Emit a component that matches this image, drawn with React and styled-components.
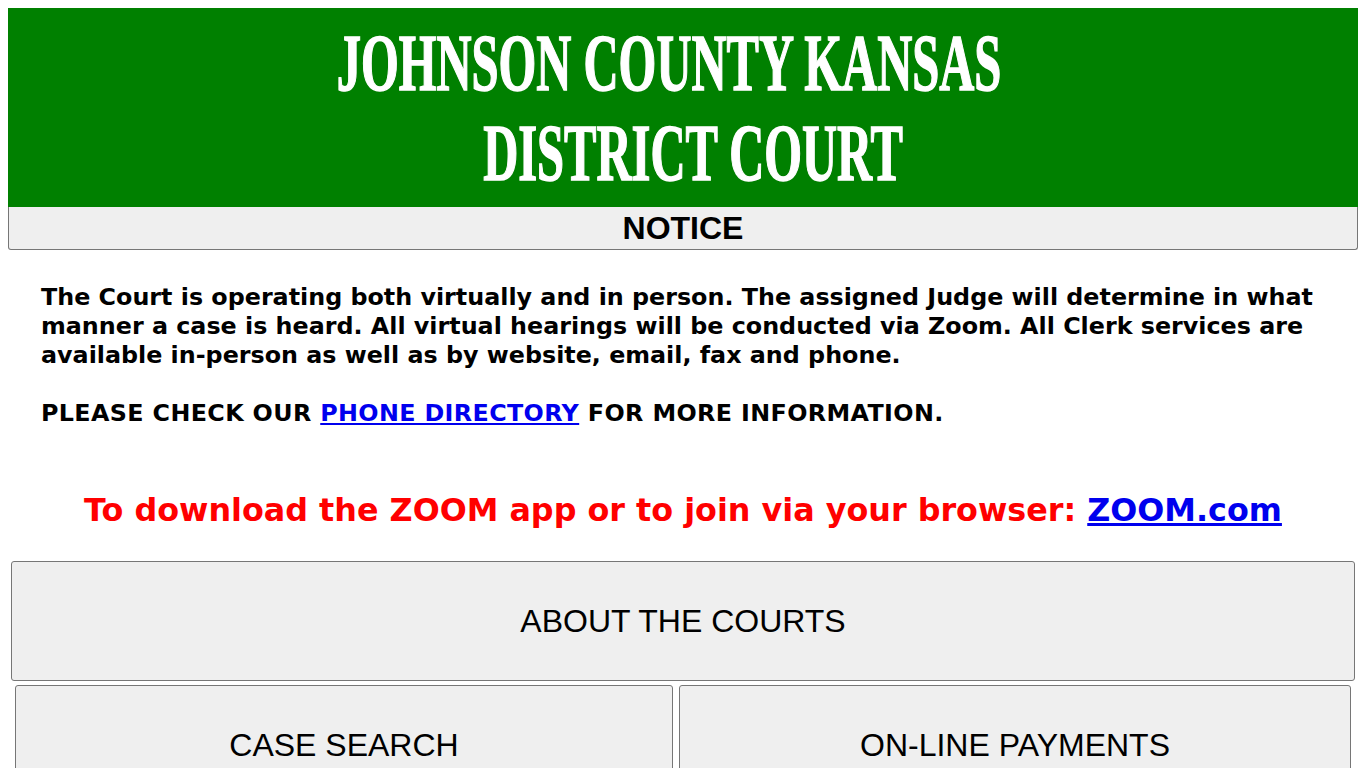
import React from 'react';
import styled, { createGlobalStyle } from 'styled-components';

const GlobalStyle = createGlobalStyle`
  body {
    margin: 8px;
    background: #ffffff;
    font-family: "Liberation Sans", Arial, sans-serif;
    color: #000;
  }
`;

const Banner = styled.header`
  background-color: #008000;
  height: 199px;
  padding-top: 10px;
  box-sizing: border-box;
  text-align: center;
  overflow: hidden;
`;

const BannerLine = styled.div`
  font-family: "Liberation Serif", "Times New Roman", serif;
  font-weight: bold;
  font-size: 80px;
  line-height: 90px;
  color: #ffffff;
  white-space: nowrap;
  transform: translateX(${(p) => p.shift}px) scaleX(0.607);
  transform-origin: center;
  -webkit-text-stroke: 1.5px #ffffff;
  text-shadow: 0 0 1px rgba(0, 60, 0, 0.6);
`;

const NoticeBar = styled.div`
  background-color: #efefef;
  border: 1px solid #767676;
  border-top: none;
  border-radius: 0 0 3px 3px;
  height: 43px;
  box-sizing: border-box;
  display: flex;
  align-items: center;
  justify-content: center;
  font-weight: bold;
  font-size: 32px;
`;

const NoticeText = styled.div`
  font-family: "DejaVu Sans", Tahoma, Verdana, sans-serif;
  font-weight: bold;
  font-size: 23.8px;
  line-height: 29px;
  padding: 33px 33px 0;
  white-space: nowrap;
`;

const CapsLine = styled.span`
  letter-spacing: 0.37px;
`;

const Link = styled.a`
  color: #0000ee;
  text-decoration: underline;
`;

const ZoomLine = styled.div`
  font-family: "DejaVu Sans", Tahoma, Verdana, sans-serif;
  font-weight: bold;
  font-size: 31.8px;
  line-height: 40px;
  color: #ff0000;
  text-align: center;
  margin-top: 62px;
  white-space: nowrap;
`;

const Nav = styled.nav`
  margin-top: 31px;
  display: flex;
  flex-direction: column;
  gap: 4px;
`;

const NavRow = styled.div`
  display: grid;
  grid-template-columns: ${(p) => p.cols};
  gap: 6px;
  padding: 0 ${(p) => p.inset}px;
`;

const NavButton = styled.button`
  height: 120px;
  background-color: #efefef;
  border: 1px solid #767676;
  border-radius: 3px;
  font-family: "Liberation Sans", Arial, sans-serif;
  font-size: 32px;
  color: #000;
  padding: 0;
  cursor: pointer;
`;

export default function App() {
  return (
    <>
      <GlobalStyle />
      <Banner>
        <BannerLine shift={-14}>JOHNSON COUNTY KANSAS</BannerLine>
        <BannerLine shift={10}>DISTRICT COURT</BannerLine>
      </Banner>
      <NoticeBar>NOTICE</NoticeBar>
      <NoticeText>
        The Court is operating both virtually and in person. The assigned Judge will determine in what
        <br />
        manner a case is heard. All virtual hearings will be conducted via Zoom. All Clerk services are
        <br />
        available in-person as well as by website, email, fax and phone.
        <br />
        <br />
        <CapsLine>
          PLEASE CHECK OUR <Link href="#">PHONE DIRECTORY</Link> FOR MORE INFORMATION.
        </CapsLine>
      </NoticeText>
      <ZoomLine>
        To download the ZOOM app or to join via your browser: <Link href="#">ZOOM.com</Link>
      </ZoomLine>
      <Nav>
        <NavRow cols="1fr" inset={3}>
          <NavButton>ABOUT THE COURTS</NavButton>
        </NavRow>
        <NavRow cols="658fr 672fr" inset={7}>
          <NavButton>CASE SEARCH</NavButton>
          <NavButton>ON-LINE PAYMENTS</NavButton>
        </NavRow>
      </Nav>
    </>
  );
}
